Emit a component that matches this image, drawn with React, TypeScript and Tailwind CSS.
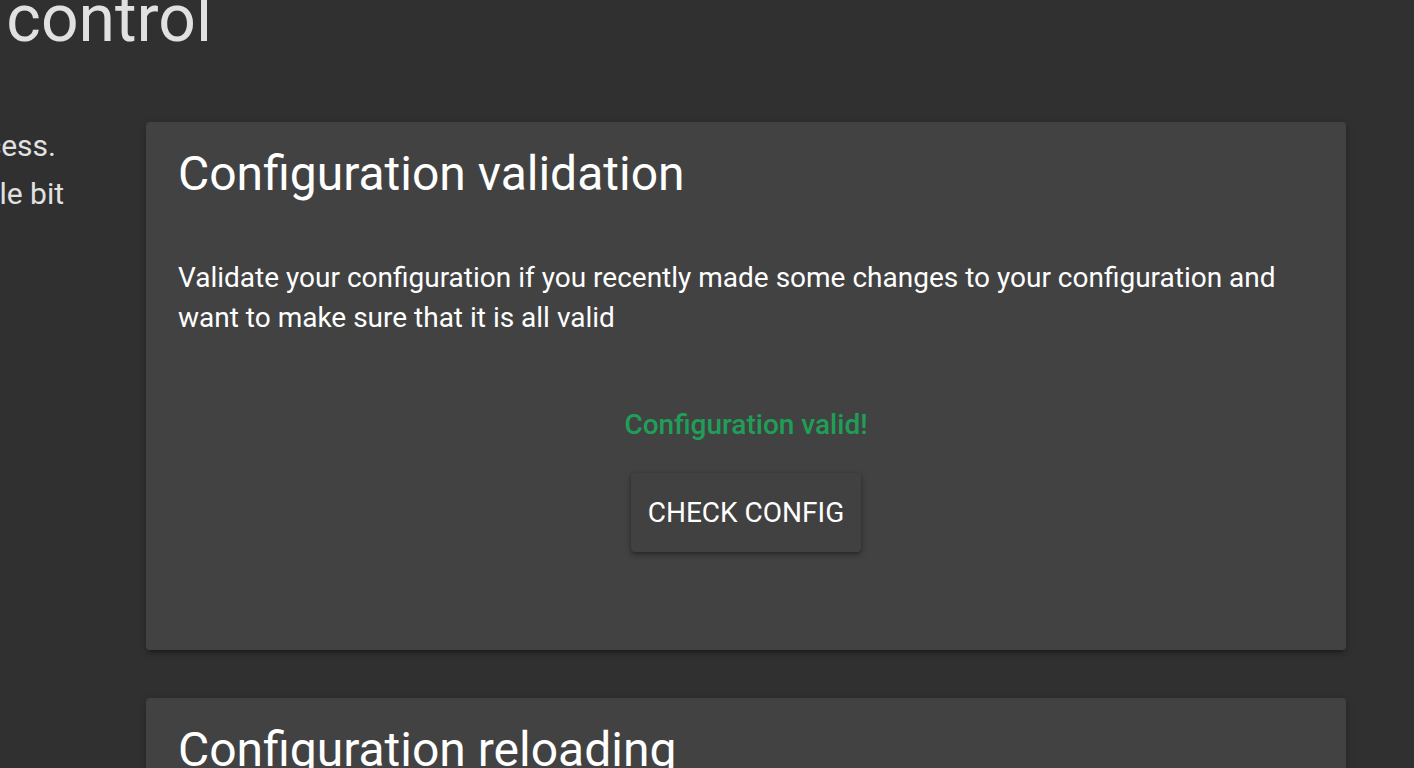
import React from "react";

const font = { fontFamily: "Roboto, 'Noto Sans', 'Liberation Sans', sans-serif" };

function Card({ title, children }: { title: string; children?: React.ReactNode }) {
  return (
    <div className="bg-[#424242] rounded-[4px] shadow-[0_4px_4px_0_rgba(0,0,0,0.14),0_2px_10px_0_rgba(0,0,0,0.12),0_6px_2px_-4px_rgba(0,0,0,0.2)] px-[32px] pt-[20px]">
      <h2 className="text-[48px] leading-[64px] font-normal text-white">{title}</h2>
      {children}
    </div>
  );
}

export default function App() {
  return (
    <div style={font} className="w-full h-[768px] overflow-hidden bg-[#303030] text-[#e1e1e1]">
      <div className="w-[212px] flex justify-end mt-[-13px]">
        <h1 className="whitespace-nowrap text-[66px] leading-[64px] font-normal text-[#e1e1e1]">Server control</h1>
      </div>
      <div className="flex mt-[71px]">
        <div className="w-[64px] shrink-0 flex flex-col items-end text-[30px] leading-[48px] text-[#e1e1e1]">
          <p className="whitespace-nowrap mr-[8px]">Changing your configuration can be a tiresome process.</p>
          <p className="whitespace-nowrap">We know. This section will try to make your life a little bit</p>
        </div>
        <div className="ml-[82px] w-[1200px] flex flex-col gap-[48px]">
          <Card title="Configuration validation">
            <p className="mt-[52px] text-[28px] leading-[40px] text-white">
              Validate your configuration if you recently made some changes to your configuration and want to make sure that it is all valid
            </p>
            <div className="flex flex-col items-center pt-[66px] pb-[98px]">
              <p className="text-[28px] leading-[40px] font-medium text-[#1f9e58] translate-y-[1px]">Configuration valid!</p>
              <button className="mt-[29px] h-[79px] px-[17px] rounded-[4px] bg-[#414141] text-white text-[28px] font-normal shadow-[0_3px_6px_rgba(0,0,0,0.3),0_1px_3px_rgba(0,0,0,0.2)]">
                CHECK CONFIG
              </button>
            </div>
          </Card>
          <Card title="Configuration reloading">
            <p className="mt-[52px] text-[28px] leading-[40px] text-white">
              Some parts of Home Assistant can reload without requiring a restart. Hitting reload will unload their current configuration and load the new one.
            </p>
          </Card>
        </div>
      </div>
    </div>
  );
}
